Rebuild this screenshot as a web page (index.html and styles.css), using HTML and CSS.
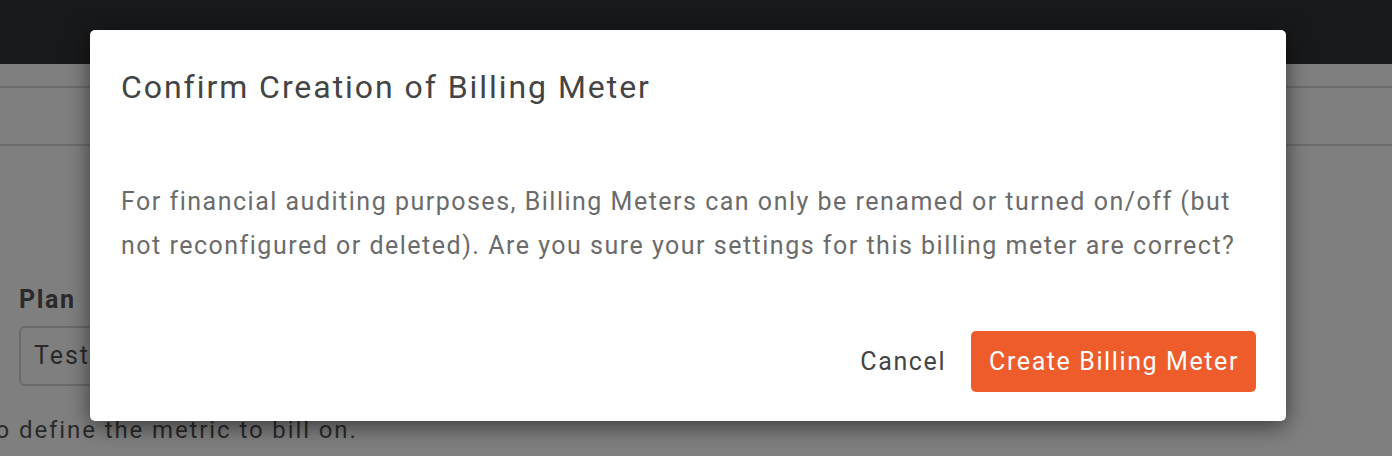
FILE: index.html
```html
<!DOCTYPE html>
<html lang="en">
<head>
<meta charset="utf-8">
<title>Confirm Creation of Billing Meter</title>
<link rel="stylesheet" href="styles.css">
</head>
<body>
<div class="page">
  <header class="topbar"></header>
  <div class="subbar"></div>
  <div class="tabbar"></div>
  <main class="content">
    <label class="field-label">Plan</label>
    <div class="input">Test</div>
    <p class="hint">to define the metric to bill on.</p>
  </main>
</div>
<div class="backdrop"></div>
<div class="modal" role="dialog">
  <div class="modal-header">
    <h2 class="modal-title">Confirm Creation of Billing Meter</h2>
  </div>
  <div class="modal-body">
    <p>For financial auditing purposes, Billing Meters can only be renamed or turned on/off (but not reconfigured or deleted). Are you sure your settings for this billing meter are correct?</p>
  </div>
  <div class="modal-footer">
    <button class="btn btn-link">Cancel</button>
    <button class="btn btn-primary">Create Billing Meter</button>
  </div>
</div>
</body>
</html>
```
FILE: styles.css
```css
* { box-sizing: border-box; }
html, body { margin: 0; padding: 0; }
body {
  font-family: Roboto, "Liberation Sans", sans-serif;
  background: #fff;
  width: 1392px;
  height: 456px;
  overflow: hidden;
  position: relative;
}
.page { display: flex; flex-direction: column; }
.topbar { height: 64px; background: #2e3236; }
.subbar { height: 24px; border-bottom: 2px solid #d6d6d6; background: #fff; }
.tabbar { height: 58px; border-bottom: 2px solid #d6d6d6; background: #fff; }
.content { padding: 136px 19px 0; display: flex; flex-direction: column; }
.field-label {
  font-size: 25px;
  font-weight: 700;
  color: #555;
  line-height: 28px;
  letter-spacing: 1.6px;
  margin-bottom: 12px;
  margin-top: 4px;
}
.input {
  width: 300px;
  height: 60px;
  border: 2px solid #d4d4d4;
  border-radius: 6px;
  padding: 0 13px;
  font-size: 25px;
  line-height: 56px;
  letter-spacing: 2px;
  color: #555;
}
.hint {
  margin: 30px 0 0 -33px;
  font-size: 24px;
  line-height: 28px;
  letter-spacing: 1.9px;
  color: #555;
}
.backdrop {
  position: absolute;
  inset: 0;
  background: rgba(0, 0, 0, 0.5);
}
.modal {
  position: absolute;
  left: 90px;
  top: 30px;
  width: 1196px;
  background: #fff;
  border-radius: 5px;
  box-shadow: 0 5px 22px rgba(0, 0, 0, 0.55);
}
.modal-header { padding: 39px 31px 27px; }
.modal-title {
  margin: 0;
  font-size: 32px;
  font-weight: 400;
  line-height: 36px;
  letter-spacing: 1.95px;
  color: #444;
}
.modal-body { padding: 48px 31px 0; }
.modal-body p {
  margin: 0;
  font-size: 25px;
  line-height: 44px;
  letter-spacing: 1.5px;
  color: #6b6b6b;
}
.modal-footer {
  padding: 63px 30px 29px;
  display: flex;
  justify-content: flex-end;
  gap: 8px;
}
.btn {
  font-family: Roboto, "Liberation Sans", sans-serif;
  font-size: 25px;
  height: 61px;
  padding: 0 17px 0 18px;
  letter-spacing: 1.6px;
  border: 0;
  border-radius: 5px;
  cursor: pointer;
}
.btn-link { background: transparent; color: #444; }
.btn-primary { background: #ee5c2c; color: #fff; }
```
